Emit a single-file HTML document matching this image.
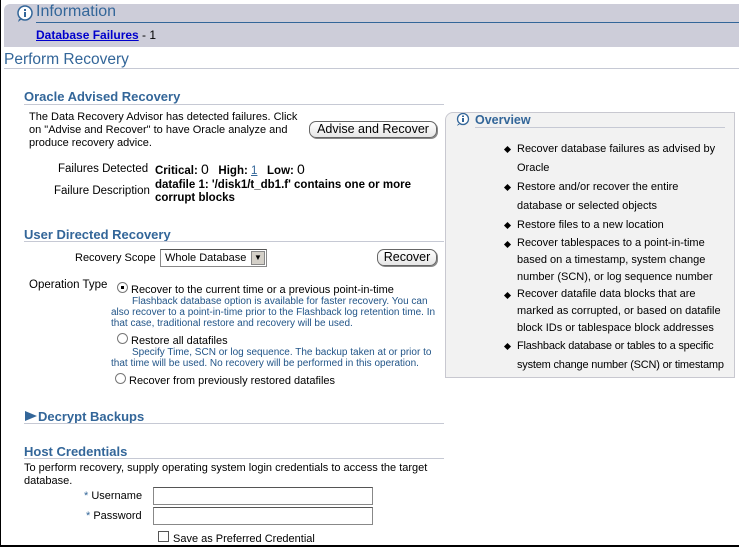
<!DOCTYPE html>
<html><head><meta charset="utf-8"><style>
*{margin:0;padding:0;box-sizing:border-box}
body{width:739px;height:547px;overflow:hidden;background:#fff;font-family:"Liberation Sans",sans-serif;font-size:11.5px;color:#000;position:relative}
.a{position:absolute;white-space:nowrap}
.h{color:#336699;font-weight:bold;font-size:13px}
.line{position:absolute;height:1px;background:#c6c9d4}
.btn{position:absolute;border:1px solid #666;border-radius:7px;background:linear-gradient(#fff,#e6e6e6);font-size:12.5px;text-align:center;box-shadow:1px 1px 0 #888}
.blue{color:#225588;font-size:10px}
.radio{position:absolute;width:11px;height:11px;border-radius:50%;border:1px solid #777;background:#fff}
.inp{position:absolute;border:1px solid #888;border-top-color:#555;background:#fff;height:18px}
.li{position:absolute;left:72px;font-size:11px;line-height:19px;white-space:normal}
.li:before{content:"";position:absolute;left:-12px;top:7px;width:5px;height:5px;background:#000;transform:rotate(45deg)}
</style></head><body>
<div style="position:absolute;left:0;top:0;width:1px;height:547px;background:#000"></div>
<div style="position:absolute;left:0;top:545px;width:739px;height:2px;background:#000"></div>
<div style="position:absolute;left:4px;top:4px;width:735px;height:43px;background:#cdcdd9;border-radius:6px 0 0 0"></div>
<div class="line" style="left:36px;top:22px;width:703px;background:#336699"></div>
<svg class="a" style="left:15px;top:5px" width="20" height="18"><circle cx="10" cy="8" r="7" fill="#fff" stroke="#336699" stroke-width="1.5"/><path d="M4 14 L3 17 L7 14" fill="#336699"/><rect x="9" y="7" width="2" height="5" fill="#336699"/><rect x="9" y="4" width="2" height="2" fill="#336699"/></svg>
<div class="a" style="left:36px;top:3px;font-size:16px;color:#336699">Information</div>
<div class="a" style="left:36px;top:28px;font-size:12px"><span style="font-weight:bold;color:#0000cc;text-decoration:underline">Database Failures</span> - 1</div>
<div class="a" style="left:4px;top:51px;font-size:15.5px;color:#336699">Perform Recovery</div>
<div class="line" style="left:4px;top:68px;width:735px"></div>

<div class="a h" style="left:24px;top:89px">Oracle Advised Recovery</div>
<div class="line" style="left:24px;top:104px;width:420px"></div>
<div class="a" style="left:29px;top:111px;line-height:13px;font-size:11px">The Data Recovery Advisor has detected failures. Click<br>on "Advise and Recover" to have Oracle analyze and<br>produce recovery advice.</div>
<div class="btn" style="left:309px;top:121px;width:128px;height:17px;line-height:15px">Advise and Recover</div>
<div class="a" style="left:58px;top:163px">Failures Detected</div>
<div class="a" style="left:155px;top:161px"><b>Critical:</b> <span style="font-size:14px">0</span> &nbsp;&nbsp;<b>High:</b> <span style="color:#336699;text-decoration:underline">1</span> &nbsp;&nbsp;<b>Low:</b> <span style="font-size:14px">0</span></div>
<div class="a" style="left:54px;top:185px">Failure Description</div>
<div class="a" style="left:155px;top:179px;font-weight:bold;line-height:13px">datafile 1: '/disk1/t_db1.f' contains one or more<br>corrupt blocks</div>

<div class="a h" style="left:24px;top:227px">User Directed Recovery</div>
<div class="line" style="left:24px;top:241px;width:420px"></div>
<div class="a" style="left:75px;top:252px;font-size:11px">Recovery Scope</div>
<div class="inp" style="left:160px;top:249px;width:107px;height:18px;font-size:11px;padding:2px 4px">Whole Database<span style="position:absolute;right:1px;top:1px;width:14px;height:14px;background:#d4d0c8;border:1px solid #888;font-size:8px;text-align:center;line-height:12px">▼</span></div>
<div class="btn" style="left:377px;top:249px;width:60px;height:17px;line-height:15px">Recover</div>
<div class="a" style="left:29px;top:279px">Operation Type</div>
<div class="radio" style="left:117px;top:282px"><div style="position:absolute;left:3px;top:3px;width:3px;height:3px;background:#000"></div></div>
<div class="a" style="left:131px;top:284px;font-size:11px">Recover to the current time or a previous point-in-time</div>
<div class="a blue" style="left:111px;top:296px;line-height:11px;white-space:normal;width:335px;text-indent:21px">Flashback database option is available for faster recovery. You can also recover to a point-in-time prior to the Flashback log retention time. In that case, traditional restore and recovery will be used.</div>
<div class="radio" style="left:117px;top:333px"></div>
<div class="a" style="left:131px;top:335px;font-size:11px">Restore all datafiles</div>
<div class="a blue" style="left:111px;top:347px;line-height:11px;white-space:normal;width:335px;text-indent:21px">Specify Time, SCN or log sequence. The backup taken at or prior to that time will be used. No recovery will be performed in this operation.</div>
<div class="radio" style="left:115px;top:373px"></div>
<div class="a" style="left:129px;top:375px;font-size:11px">Recover from previously restored datafiles</div>

<svg class="a" style="left:24px;top:410px" width="14" height="12"><path d="M1 1 L13 6 L1 11Z" fill="#336699"/></svg>
<div class="a h" style="left:38px;top:409px">Decrypt Backups</div>
<div class="line" style="left:24px;top:423px;width:420px"></div>
<div class="a h" style="left:24px;top:444px">Host Credentials</div>
<div class="line" style="left:24px;top:458px;width:420px"></div>
<div class="a" style="left:24px;top:462px;line-height:13px;font-size:11px">To perform recovery, supply operating system login credentials to access the target<br>database.</div>
<div class="a" style="left:84px;top:490px;font-size:11px"><span style="color:#336699">*</span> Username</div>
<div class="inp" style="left:153px;top:487px;width:220px"></div>
<div class="a" style="left:86px;top:510px;font-size:11px"><span style="color:#336699">*</span> Password</div>
<div class="inp" style="left:153px;top:507px;width:220px"></div>
<div style="position:absolute;left:158px;top:531px;width:11px;height:11px;border:1px solid #555;background:#fff"></div>
<div class="a" style="left:173px;top:533px;font-size:11px">Save as Preferred Credential</div>

<div style="position:absolute;left:445px;top:112px;width:290px;height:266px;background:#f2f2f2;border:1px solid #c8c8d0;border-radius:8px 0 0 0"></div>
<svg class="a" style="left:455px;top:113px" width="16" height="14"><circle cx="8" cy="6" r="5.5" fill="#fff" stroke="#336699" stroke-width="1.3"/><path d="M3 11 L2 13 L5 11" fill="#336699"/><rect x="7" y="5" width="2" height="4" fill="#336699"/><rect x="7" y="2.5" width="2" height="1.5" fill="#336699"/></svg>
<div class="a h" style="left:475px;top:113px;font-size:12.5px">Overview</div>
<div class="line" style="left:475px;top:127px;width:250px"></div>
<div style="position:absolute;left:445px;top:140px;width:290px">
<div class="li" style="top:0;width:205px">Recover database failures as advised by Oracle</div>
<div class="li" style="top:38px;width:190px">Restore and/or recover the entire database or selected objects</div>
<div class="li" style="top:76px;width:210px">Restore files to a new location</div>
<div class="li" style="top:95px;width:215px;line-height:17px">Recover tablespaces to a point-in-time based on a timestamp, system change number (SCN), or log sequence number</div>
<div class="li" style="top:146px;width:215px;line-height:17px">Recover datafile data blocks that are marked as corrupted, or based on datafile block IDs or tablespace block addresses</div>
<div class="li" style="top:197px;width:218px;letter-spacing:-0.2px">Flashback database or tables to a specific system change number (SCN) or timestamp</div>
</div>
</body></html>
